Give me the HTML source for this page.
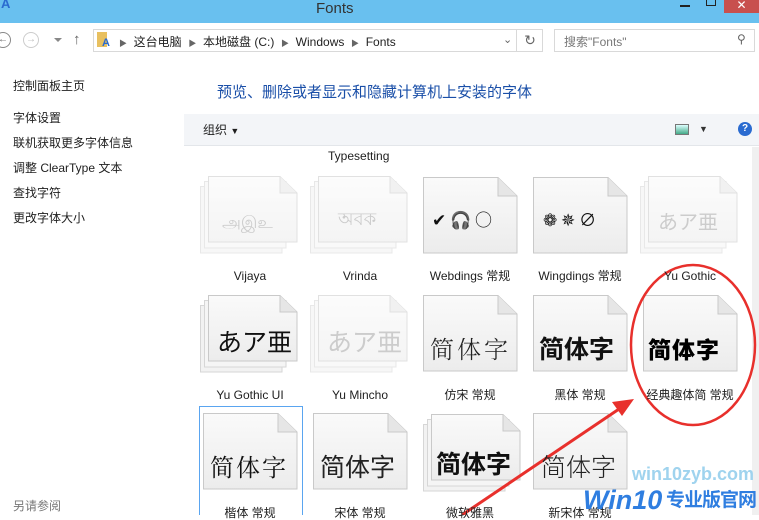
<!DOCTYPE html>
<html><head><meta charset="utf-8"><style>
*{margin:0;padding:0;box-sizing:border-box}
body{width:759px;height:515px;overflow:hidden;position:relative;background:#fff;font-family:"Liberation Sans","Noto Sans CJK SC",sans-serif;font-size:12px;color:#1e1e1e}
.a{position:absolute;white-space:nowrap}
.lbl{position:absolute;width:110px;text-align:center;font-size:12px;color:#1e1e1e;white-space:nowrap;line-height:14px}
.glyph{position:absolute;font-family:"Noto Sans CJK SC",sans-serif;white-space:nowrap;line-height:1}
</style></head><body>
<div class="a" style="left:0;top:0;width:759px;height:23px;background:#69c0ef"></div>
<div class="a" style="left:1px;top:-4px;color:#2a6bd0;font-weight:bold;font-size:13px">A</div>
<div class="a" style="left:316px;top:0;font-size:15px;color:#333">Fonts</div>
<div class="a" style="left:680px;top:5px;width:10px;height:2px;background:#222"></div>
<div class="a" style="left:706px;top:-1px;width:10px;height:7px;border:1.5px solid #222"></div>
<div class="a" style="left:724px;top:0;width:35px;height:13px;background:#c8504e;color:#fff;text-align:center;font-size:12px;line-height:11px">✕</div>
<div class="a" style="left:-5px;top:32px;width:16px;height:16px;border:1.5px solid #888;border-radius:50%;font-size:10px;line-height:13px;text-align:center;color:#666">←</div>
<div class="a" style="left:23px;top:32px;width:16px;height:16px;border:1.5px solid #ccc;border-radius:50%;font-size:10px;line-height:13px;text-align:center;color:#bbb">→</div>
<div class="a" style="left:54px;top:38px;border:4px solid transparent;border-top:4px solid #888"></div>
<div class="a" style="left:73px;top:31px;font-size:15px;color:#666">↑</div>
<div class="a" style="left:93px;top:29px;width:450px;height:23px;border:1px solid #d9d9d9"></div>
<div class="a" style="left:97px;top:32px;width:10px;height:15px;background:#e8c060"></div>
<div class="a" style="left:102px;top:37px;color:#2a6bd0;font-weight:bold;font-size:11px">A</div>
<div class="a" style="left:119px;top:33px;font-size:12px;color:#222">
<span style="color:#666;font-size:8px">▶</span>&nbsp;&nbsp;这台电脑&nbsp;&nbsp;<span style="color:#666;font-size:8px">▶</span>&nbsp;&nbsp;本地磁盘 (C:)&nbsp;&nbsp;<span style="color:#666;font-size:8px">▶</span>&nbsp;&nbsp;Windows&nbsp;&nbsp;<span style="color:#666;font-size:8px">▶</span>&nbsp;&nbsp;Fonts</div>
<div class="a" style="left:503px;top:33px;color:#666;font-size:11px">⌄</div>
<div class="a" style="left:516px;top:29px;width:27px;height:23px;border-left:1px solid #d9d9d9;text-align:center;color:#666;font-size:14px;line-height:22px">↻</div>
<div class="a" style="left:554px;top:29px;width:201px;height:23px;border:1px solid #d9d9d9"></div>
<div class="a" style="left:564px;top:33px;color:#777;font-size:12px">搜索"Fonts"</div>
<div class="a" style="left:737px;top:32px;color:#666;font-size:12px">⚲</div>
<div class="a" style="left:13px;top:74px;line-height:25px;font-size:12px">控制面板主页</div>
<div class="a" style="left:13px;top:106px;line-height:25px;font-size:12px">字体设置<br>联机获取更多字体信息<br>调整 ClearType 文本<br>查找字符<br>更改字体大小</div>
<div class="a" style="left:13px;top:497px;color:#777;font-size:12px">另请参阅</div>
<div class="a" style="left:217px;top:81px;font-size:15px;color:#1a4fa8">预览、删除或者显示和隐藏计算机上安装的字体</div>
<div class="a" style="left:184px;top:114px;width:575px;height:32px;background:#f3f5f8;border-bottom:1px solid #e3e6ea"></div>
<div class="a" style="left:203px;top:121px;font-size:12px">组织 <span style="font-size:9px">▼</span></div>
<div class="a" style="left:675px;top:124px;width:14px;height:11px;border:1px solid #777;background:linear-gradient(#dff,#4a8)"></div>
<div class="a" style="left:699px;top:124px;font-size:9px;color:#333">▼</div>
<div class="a" style="left:738px;top:122px;width:14px;height:14px;border-radius:50%;background:#2a6bd0;color:#fff;font-size:10px;font-weight:bold;text-align:center;line-height:14px">?</div>
<div class="a" style="left:752px;top:147px;width:7px;height:368px;background:#f0f0f0"></div>
<div class="a" style="left:328px;top:149px;font-size:12px">Typesetting</div>

<svg class="a" style="left:0;top:0" width="759" height="515">
<defs>
<linearGradient id="g" x1="0" y1="0" x2="0" y2="1"><stop offset="0" stop-color="#fafafa"/><stop offset="1" stop-color="#ececec"/></linearGradient>
<g id="pg"><path d="M0.5,0.5H75L94,19V76H0.5Z" fill="url(#g)" stroke="#c9c9c9"/><path d="M75,0.5V19H94" fill="#e6e6e6" stroke="#c9c9c9"/></g>
<g id="pgs"><path d="M0.5,10.5H82V77H0.5Z" fill="#f2f2f2" stroke="#d6d6d6"/><path d="M4.5,5.5H86V72H4.5Z" fill="#f5f5f5" stroke="#d6d6d6"/><path d="M8.5,0.5H80L97,17V66H8.5Z" fill="url(#g)" stroke="#c9c9c9"/><path d="M80,0.5V17H97" fill="#e6e6e6" stroke="#c9c9c9"/></g>
</defs>
<g opacity=".55"><use href="#pgs" x="200" y="176"/></g>
<g opacity=".55"><use href="#pgs" x="310" y="176"/></g>
<use href="#pg" x="423" y="177"/>
<use href="#pg" x="533" y="177"/>
<g opacity=".55"><use href="#pgs" x="640" y="176"/></g>
<use href="#pgs" x="200" y="295"/>
<g opacity=".55"><use href="#pgs" x="310" y="295"/></g>
<use href="#pg" x="423" y="295"/>
<use href="#pg" x="533" y="295"/>
<use href="#pg" x="643" y="295"/>
<rect x="199.5" y="406.5" width="103" height="110" fill="none" stroke="#5aa5f0"/>
<use href="#pg" x="203" y="413"/>
<use href="#pg" x="313" y="413"/>
<use href="#pgs" x="423" y="414"/>
<use href="#pg" x="533" y="413"/>
<ellipse cx="693" cy="345" rx="62" ry="80" fill="none" stroke="#e8302c" stroke-width="2.5"/>
<line x1="462" y1="515" x2="622" y2="407" stroke="#e8302c" stroke-width="3"/>
<path d="M634,399 L612,402 L622,416 Z" fill="#e8302c"/>
</svg>
<div class="glyph" style="left:222px;top:212px;font-size:17px;color:#ccc">அஇஉ</div>
<div class="glyph" style="left:338px;top:209px;font-size:18px;color:#ccc">অবক</div>
<div class="glyph" style="left:432px;top:210px;font-size:17px;color:#111">✔ 🎧 ○</div>
<div class="glyph" style="left:543px;top:210px;font-size:17px;color:#111">❁ ✵ ∅</div>
<div class="glyph" style="left:658px;top:211px;font-size:20px;color:#ccc">あア亜</div>
<div class="glyph" style="left:217px;top:329px;font-size:25px;color:#111">あア亜</div>
<div class="glyph" style="left:327px;top:329px;font-size:25px;color:#ccc">あア亜</div>
<div class="glyph" style="left:430px;top:336px;font-size:24px;color:#222;font-family:'Noto Serif CJK SC',serif;letter-spacing:3px;font-weight:300">简体字</div>
<div class="glyph" style="left:539px;top:336px;font-size:25px;color:#111;font-weight:bold">简体字</div>
<div class="glyph" style="left:648px;top:337px;font-size:23px;color:#000;font-weight:900;letter-spacing:1px">简体字</div>
<div class="glyph" style="left:210px;top:454px;font-size:24px;color:#111;font-family:'Noto Serif CJK SC',serif;letter-spacing:2px">简体字</div>
<div class="glyph" style="left:320px;top:454px;font-size:25px;color:#222">简体字</div>
<div class="glyph" style="left:436px;top:451px;font-size:25px;color:#111;font-weight:bold">简体字</div>
<div class="glyph" style="left:541px;top:454px;font-size:25px;color:#222;font-weight:300">简体字</div>
<div class="lbl" style="left:195px;top:269px">Vijaya</div>
<div class="lbl" style="left:305px;top:269px">Vrinda</div>
<div class="lbl" style="left:415px;top:269px">Webdings 常规</div>
<div class="lbl" style="left:525px;top:269px">Wingdings 常规</div>
<div class="lbl" style="left:635px;top:269px">Yu Gothic</div>
<div class="lbl" style="left:195px;top:388px">Yu Gothic UI</div>
<div class="lbl" style="left:305px;top:388px">Yu Mincho</div>
<div class="lbl" style="left:415px;top:388px">仿宋 常规</div>
<div class="lbl" style="left:525px;top:388px">黑体 常规</div>
<div class="lbl" style="left:635px;top:388px">经典趣体简 常规</div>
<div class="lbl" style="left:195px;top:506px">楷体 常规</div>
<div class="lbl" style="left:305px;top:506px">宋体 常规</div>
<div class="lbl" style="left:415px;top:506px">微软雅黑</div>
<div class="lbl" style="left:525px;top:506px">新宋体 常规</div>
<div class="a" style="left:632px;top:464px;font-size:18px;font-weight:bold;color:#9fd3ee;line-height:20px">win10zyb.com</div>
<div class="a" style="left:583px;top:485px;font-size:27px;font-weight:bold;font-style:italic;color:#2f7ee0;line-height:30px">Win10</div>
<div class="a" style="left:666px;top:489px;font-size:19px;font-weight:bold;color:#2f7ee0;line-height:24px;letter-spacing:-1px">专业版官网</div>
</body></html>
